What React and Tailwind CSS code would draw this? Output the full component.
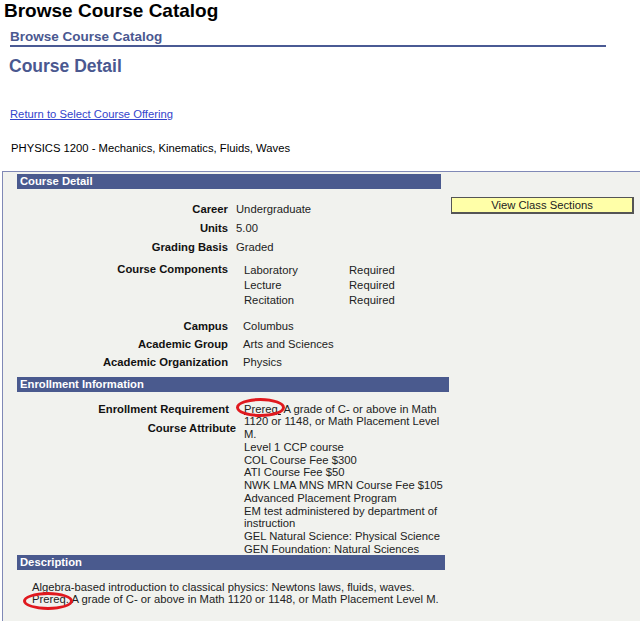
export default function App() {
  const labelCls = "w-[211px] text-right font-bold text-[#111]";
  return (
    <div className="relative h-[621px] w-[640px] overflow-hidden bg-white text-[11.25px] text-[#222]" style={{ fontFamily: '"Liberation Sans", Arial, sans-serif' }}>
      <h1 className="pl-[4px] text-[19px] font-bold leading-[22px] text-black">Browse Course Catalog</h1>
      <div className="ml-[10px] mt-[6px] w-[596px] border-b-2 border-[#4a5a94] text-[13.5px] font-bold leading-[17px] text-[#4a5890]">Browse Course Catalog</div>
      <div className="ml-[9px] mt-[8px] text-[17.5px] font-bold leading-[22px] text-[#4a5890]">Course Detail</div>
      <a href="#" className="ml-[10px] mt-[30px] block w-fit leading-[14px] text-[#3344cc] underline">Return to Select Course Offering</a>
      <div className="ml-[11px] mt-[20px] leading-[14px] text-black">PHYSICS 1200 - Mechanics, Kinematics, Fluids, Waves</div>

      <div className="ml-[2px] mt-[16px] border-l border-t border-[#8089b6] bg-[#f1f2ee] pl-[14px] pt-[2px] pb-[40px]">
        <div className="flex">
          <div className="w-[424px]">
            <div className="h-[15px] bg-[#4a5a8e] pl-[3px] font-bold leading-[15px] text-white">Course Detail</div>
            <div className="mt-[11px] flex h-[19px] items-center"><div className={labelCls}>Career</div><div className="ml-[8px]">Undergraduate</div></div>
            <div className="flex h-[19px] items-center"><div className={labelCls}>Units</div><div className="ml-[8px]">5.00</div></div>
            <div className="flex h-[18px] items-center"><div className={labelCls}>Grading Basis</div><div className="ml-[8px]">Graded</div></div>
            <div className="mt-[6px] flex">
              <div className={labelCls + " leading-[15px]"}>Course Components</div>
              <div className="ml-[16px] pt-[1px] leading-[15px]">
                <div className="flex"><span className="w-[105px]">Laboratory</span><span>Required</span></div>
                <div className="flex"><span className="w-[105px]">Lecture</span><span>Required</span></div>
                <div className="flex"><span className="w-[105px]">Recitation</span><span>Required</span></div>
              </div>
            </div>
            <div className="mt-[9px] flex h-[18px] items-center"><div className={labelCls}>Campus</div><div className="ml-[15px]">Columbus</div></div>
            <div className="flex h-[18.5px] items-center"><div className={labelCls}>Academic Group</div><div className="ml-[15px]">Arts and Sciences</div></div>
            <div className="flex h-[18.5px] items-center"><div className={labelCls}>Academic Organization</div><div className="ml-[15px]">Physics</div></div>
          </div>
          <div className="ml-[10px] mt-[23px]">
            <button className="h-[17px] w-[183px] border border-b-2 border-r-2 border-[#555] bg-[#ffffa8] text-[11.25px] leading-[14px] text-[#222]">View Class Sections</button>
          </div>
        </div>

        <div className="mt-[5px] h-[15px] w-[432px] bg-[#4a5a8e] pl-[3px] font-bold leading-[15px] text-white">Enrollment Information</div>
        <div className="mt-[10.5px] flex leading-[12.75px]">
          <div className="w-[219px] text-right font-bold text-[#111]">
            <div className="pr-[7px]">Enrollment Requirement</div>
            <div className="mt-[6.5px]">Course Attribute</div>
          </div>
          <div className="ml-[8px]">
            <div><span className="underline">Prereq.</span> A grade of C- or above in Math</div>
            <div>1120 or 1148, or Math Placement Level</div>
            <div>M.</div>
            <div>Level 1 CCP course</div>
            <div>COL Course Fee $300</div>
            <div>ATI Course Fee $50</div>
            <div>NWK LMA MNS MRN Course Fee $105</div>
            <div>Advanced Placement Program</div>
            <div>EM test administered by department of</div>
            <div>instruction</div>
            <div>GEL Natural Science: Physical Science</div>
            <div>GEN Foundation: Natural Sciences</div>
          </div>
        </div>

        <div className="-mt-[1px] h-[15px] w-[428px] bg-[#4a5a8e] pl-[3px] font-bold leading-[15px] text-white">Description</div>
        <div className="mt-[11px] pl-[15px] leading-[12.75px]">
          <div>Algebra-based introduction to classical physics: Newtons laws, fluids, waves.</div>
          <div>Prereq. A grade of C- or above in Math 1120 or 1148, or Math Placement Level M.</div>
        </div>
      </div>

      <div className="pointer-events-none absolute left-[236px] top-[398px] h-[19px] w-[49px] rounded-[50%] border-[3px] border-[#e0191e]" />
      <div className="pointer-events-none absolute left-[23px] top-[592px] h-[18px] w-[50px] rounded-[50%] border-[3px] border-[#e0191e]" />
    </div>
  );
}
